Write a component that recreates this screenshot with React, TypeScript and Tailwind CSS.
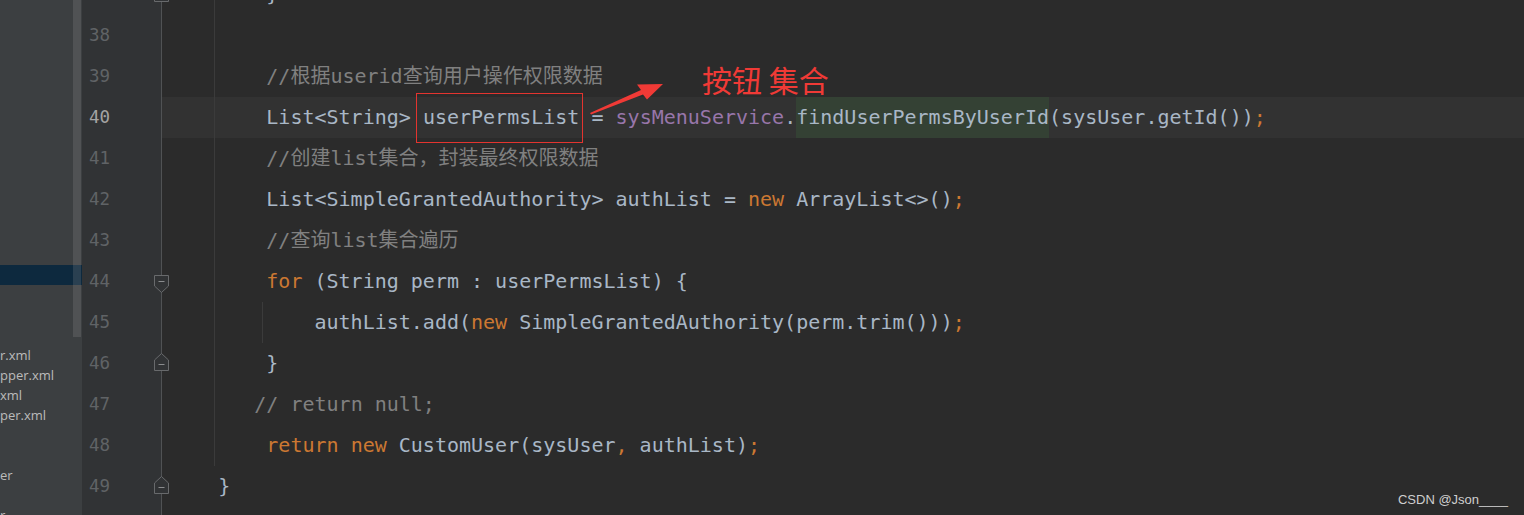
import React from "react";

type Kind = "kw" | "cm" | "fd" | "pn" | "box" | "use";
type Tok = { t: string; k?: Kind };
type Line = { n: number; toks: Tok[]; fold?: "start" | "end"; current?: boolean };

const mono = "font-['DejaVu_Sans_Mono','Noto_Sans_CJK_SC',monospace]";

const kindClass: Record<string, string> = {
  kw: "text-[#cc7832]",
  cm: "text-[#808080]",
  fd: "text-[#9876aa]",
  pn: "text-[#cc7832]",
};

const lines: Line[] = [
  { n: 37, toks: [{ t: "        }" }], fold: "end" },
  { n: 38, toks: [] },
  { n: 39, toks: [{ t: "        " }, { t: "//根据userid查询用户操作权限数据", k: "cm" }] },
  {
    n: 40,
    current: true,
    toks: [
      { t: "        List<String> " },
      { t: "userPermsList", k: "box" },
      { t: " = " },
      { t: "sysMenuService", k: "fd" },
      { t: "." },
      { t: "findUserPermsByUserId", k: "use" },
      { t: "(sysUser.getId())" },
      { t: ";", k: "pn" },
    ],
  },
  { n: 41, toks: [{ t: "        " }, { t: "//创建list集合，封装最终权限数据", k: "cm" }] },
  {
    n: 42,
    toks: [
      { t: "        List<SimpleGrantedAuthority> authList = " },
      { t: "new", k: "kw" },
      { t: " ArrayList<>()" },
      { t: ";", k: "pn" },
    ],
  },
  { n: 43, toks: [{ t: "        " }, { t: "//查询list集合遍历", k: "cm" }] },
  {
    n: 44,
    fold: "start",
    toks: [{ t: "        " }, { t: "for", k: "kw" }, { t: " (String perm : userPermsList) {" }],
  },
  {
    n: 45,
    toks: [
      { t: "            authList.add(" },
      { t: "new", k: "kw" },
      { t: " SimpleGrantedAuthority(perm.trim()))" },
      { t: ";", k: "pn" },
    ],
  },
  { n: 46, fold: "end", toks: [{ t: "        }" }] },
  { n: 47, toks: [{ t: "       " }, { t: "// return null;", k: "cm" }] },
  {
    n: 48,
    toks: [
      { t: "        " },
      { t: "return", k: "kw" },
      { t: " " },
      { t: "new", k: "kw" },
      { t: " CustomUser(sysUser" },
      { t: ",", k: "pn" },
      { t: " authList)" },
      { t: ";", k: "pn" },
    ],
  },
  { n: 49, fold: "end", toks: [{ t: "    }" }] },
  { n: 50, toks: [] },
];

// project tree rows, only the tail of each name is visible
const files = [
  "", "", "", "", "", "", "", "", "", "", "", "", "", "",
  "", "", "", "r.xml", "pper.xml", "xml", "per.xml", "", "", "er", "", "r",
];

function FoldMarker({ dir }: { dir: "start" | "end" }) {
  return (
    <svg
      className={`absolute left-[72px] z-10 ${dir === "start" ? "top-[14px]" : "top-[10px]"}`}
      width="15"
      height="18"
      viewBox="0 0 15 18"
    >
      {dir === "start" ? (
        <>
          <path d="M0.5 0.5 H14.5 V11 L7.5 17.5 L0.5 11 Z" fill="#313335" stroke="#686a6c" />
          <path d="M4.5 6.5 H10.5" stroke="#8a8c8e" />
        </>
      ) : (
        <>
          <path d="M0.5 17.5 H14.5 V7 L7.5 0.5 L0.5 7 Z" fill="#313335" stroke="#686a6c" />
          <path d="M4.5 11.5 H10.5" stroke="#8a8c8e" />
        </>
      )}
    </svg>
  );
}

function Token({ tok }: { tok: Tok }) {
  if (tok.k === "box") {
    return (
      <span className="relative inline-block h-[41px] align-top">
        {tok.t}
        <span className="absolute left-[-7px] right-[-4px] top-[-4px] bottom-[-5px] border border-[#e3342f]" />
      </span>
    );
  }
  if (tok.k === "use") {
    return <span className="inline-block h-[41px] align-top bg-[#344134]">{tok.t}</span>;
  }
  return <span className={tok.k ? kindClass[tok.k] : ""}>{tok.t}</span>;
}

export default function App() {
  return (
    <div className="relative flex w-[1524px] h-[515px] overflow-hidden bg-[#2b2b2b]">
      {/* project tree, mostly hidden */}
      <div className="relative w-[82px] shrink-0 overflow-hidden bg-[#3c3f41] pt-[5px] font-['Open_Sans',sans-serif] text-[13px] text-[#bbbbbb]">
        {files.map((f, i) => (
          <div
            key={i}
            className={`h-[20px] leading-[20px] whitespace-nowrap ${i === 13 ? "bg-[#0d293e]" : ""}`}
          >
            {f}
          </div>
        ))}
        <div className="absolute left-[73px] top-0 w-[8px] h-[337px] bg-[#a0a0a0]/20" />
      </div>

      {/* gutter */}
      <div className={`relative w-[80px] shrink-0 bg-[#313335] ${mono}`}>
        <div className="absolute left-[79px] top-0 bottom-0 w-px bg-[#505254]" />
        <div className="mt-[-26px]">
          {lines.map((l) => (
            <div
              key={l.n}
              className={`relative h-[41px] leading-[41px] pl-[7px] text-[17.5px] ${
                l.current ? "text-[#a4a3a3]" : "text-[#606366]"
              }`}
            >
              {l.n}
              {l.fold && <FoldMarker dir={l.fold} />}
            </div>
          ))}
        </div>
      </div>

      {/* editor */}
      <div className={`relative flex-1 overflow-hidden bg-[#2b2b2b] text-[20px] text-[#a9b7c6] ${mono}`}>
        <div className="mt-[-26px]">
          {lines.map((l) => (
            <div
              key={l.n}
              className={`h-[41px] leading-[41px] pl-[8px] whitespace-pre ${l.current ? "bg-[#323232]" : ""}`}
            >
              {l.toks.map((tok, i) => (
                <Token key={i} tok={tok} />
              ))}
            </div>
          ))}
        </div>
        <div className="absolute left-[52px] top-0 h-[466px] w-px bg-[#3b3b3b]" />
        <div className="absolute left-[100px] top-[302px] h-[41px] w-px bg-[#3b3b3b]" />
      </div>

      {/* annotation */}
      <svg className="absolute left-0 top-0" width="1524" height="515" viewBox="0 0 1524 515">
        <polygon
          points="590,113 641,90 637,84.5 663,84 647,99.5 643,94.5 591,114.5"
          fill="#f03a36"
        />
      </svg>
      <div className="absolute left-[702px] top-[64px] text-[30px] leading-none text-[#f03a36] font-['Noto_Sans_CJK_SC',sans-serif]">
        按钮 集合
      </div>

      <div className="absolute right-[16px] bottom-[9px] text-[13px] leading-none text-[#cfcfcf] font-['Liberation_Sans',sans-serif]">
        CSDN @Json____
      </div>
    </div>
  );
}
